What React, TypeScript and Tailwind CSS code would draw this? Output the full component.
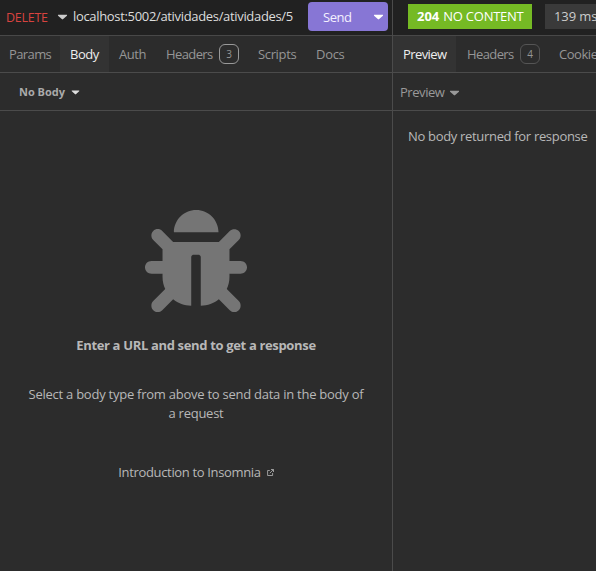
import React from "react";
import { FaBug, FaCaretDown } from "react-icons/fa";

function Tab({ label, active, badge, badgeClass = "border-[#555]", className = "", textClass = "tracking-[-0.45px]" }: {
  label: string; active?: boolean; badge?: string; badgeClass?: string; className?: string; textClass?: string;
}) {
  return (
    <div className={`flex h-full shrink-0 items-center whitespace-nowrap ${active ? "bg-[#333333] font-medium text-[#eeeeee]" : "text-[#969696]"} ${className}`}>
      <span className={textClass}>{label}</span>
      {badge && (
        <span className={`ml-auto flex size-5 items-center justify-center rounded-md border text-[10px] ${badgeClass}`}>{badge}</span>
      )}
    </div>
  );
}

export default function App() {
  return (
    <div className="flex h-[571px] w-[596px] overflow-hidden bg-[#2c2c2c] font-['Open_Sans',sans-serif] text-[13px] leading-[19px] text-[#b8b8b8]">
      <section className="flex w-[393px] shrink-0 flex-col border-r border-[#4b4b4b]">
        <header className="flex h-9 shrink-0 items-center border-b border-[#484848] bg-[#212121] pb-0.5 pl-[6px] whitespace-nowrap">
          <span className="w-[52px] pt-px text-[12.5px] tracking-[-0.25px] text-[#d8433f]">DELETE</span>
          <FaCaretDown className="h-[15px] w-[9px] scale-x-110 text-[#cccccc]" />
          <span className="ml-[6px] w-[235px] tracking-[-0.33px] text-[#dddddd]">localhost:5002/atividades/atividades/5</span>
          <div className="flex h-[29px] w-20 items-center rounded-sm bg-[#8776d5] pl-[15px] text-[#f4f1ff]">
            <span className="w-[51px] pt-px font-medium tracking-[-0.45px]">Send</span>
            <FaCaretDown className="h-[15px] w-[9px] scale-x-110 text-white" />
          </div>
        </header>
        <nav className="flex h-[37px] shrink-0 border-b border-[#4b4b4b]">
          <Tab label="Params" className="w-[60px] pl-[9px]" textClass="tracking-[-0.6px]" />
          <Tab label="Body" active className="w-[49px] pl-[10px]" />
          <Tab label="Auth" className="w-[47px] pl-[10px]" />
          <Tab label="Headers" badge="3" badgeClass="border-[#999]" className="w-[83px] pl-[10px]" textClass="tracking-[-0.6px]" />
          <Tab label="Scripts" className="w-[67px] pl-[19px]" textClass="tracking-[-0.35px]" />
          <Tab label="Docs" className="pl-[10px]" textClass="tracking-[-0.3px]" />
        </nav>
        <div className="flex h-[38px] shrink-0 items-center border-b border-[#4b4b4b] pl-[19px] text-[11px] font-bold text-[#aaaaaa]">
          <span className="w-[52px] whitespace-nowrap">No Body</span>
          <FaCaretDown className="h-3 w-[9px] scale-x-110 text-[#dddddd]" />
        </div>
        <main className="flex flex-col items-center pt-[99px]">
          <FaBug className="size-[102px] text-[#757575]" />
          <p className="mt-6 font-bold tracking-[-0.34px] whitespace-nowrap">Enter a URL and send to get a response</p>
          <p className="mt-[30px] text-center tracking-[-0.25px] whitespace-nowrap">Select a body type from above to send data in the body of<br />a request</p>
          <p className="mt-10 flex items-center gap-[6px] whitespace-nowrap">
            <span className="tracking-[-0.34px]">Introduction to Insomnia</span>
            <svg className="mb-px size-[7px]" viewBox="0 0 7 7" fill="none" stroke="currentColor" strokeWidth="0.8"><path d="M2.8 1.5H.6v5h5V4M4 .5h2.5V3M6.3.7 2.8 4.2" /></svg>
          </p>
        </main>
      </section>
      <section className="flex min-w-0 flex-1 flex-col overflow-hidden">
        <header className="flex h-9 shrink-0 items-center border-b border-[#484848] bg-[#212121] pb-[3px] pl-[15px] whitespace-nowrap">
          <div className="flex h-[25px] w-[124px] shrink-0 items-center gap-1 bg-[#75ba24] pt-px pl-[9px] text-white"><b>204</b><span className="tracking-[-0.25px]">NO CONTENT</span></div>
          <div className="ml-[13px] flex h-[25px] w-[70px] shrink-0 items-center bg-[#3a3a3a] pt-px pl-[9px] tracking-[-0.1px] text-[#cccccc]">139 ms</div>
        </header>
        <nav className="flex h-[37px] shrink-0 border-b border-[#4b4b4b]">
          <Tab label="Preview" active className="w-[63px] pl-[10px]" textClass="tracking-[-0.6px]" />
          <Tab label="Headers" badge="4" className="w-[84px] pl-[11px]" textClass="tracking-[-0.6px]" />
          <Tab label="Cookies" className="pl-[19px]" />
        </nav>
        <div className="flex h-[38px] shrink-0 items-center border-b border-[#4b4b4b] pt-px pl-[7px] text-[#999]">
          <span className="w-[50px] tracking-[-0.45px]">Preview</span>
          <FaCaretDown className="h-[15px] w-[9px] scale-x-110" />
        </div>
        <p className="pt-4 pl-[15px] tracking-[-0.32px] whitespace-nowrap">No body returned for response</p>
      </section>
    </div>
  );
}
